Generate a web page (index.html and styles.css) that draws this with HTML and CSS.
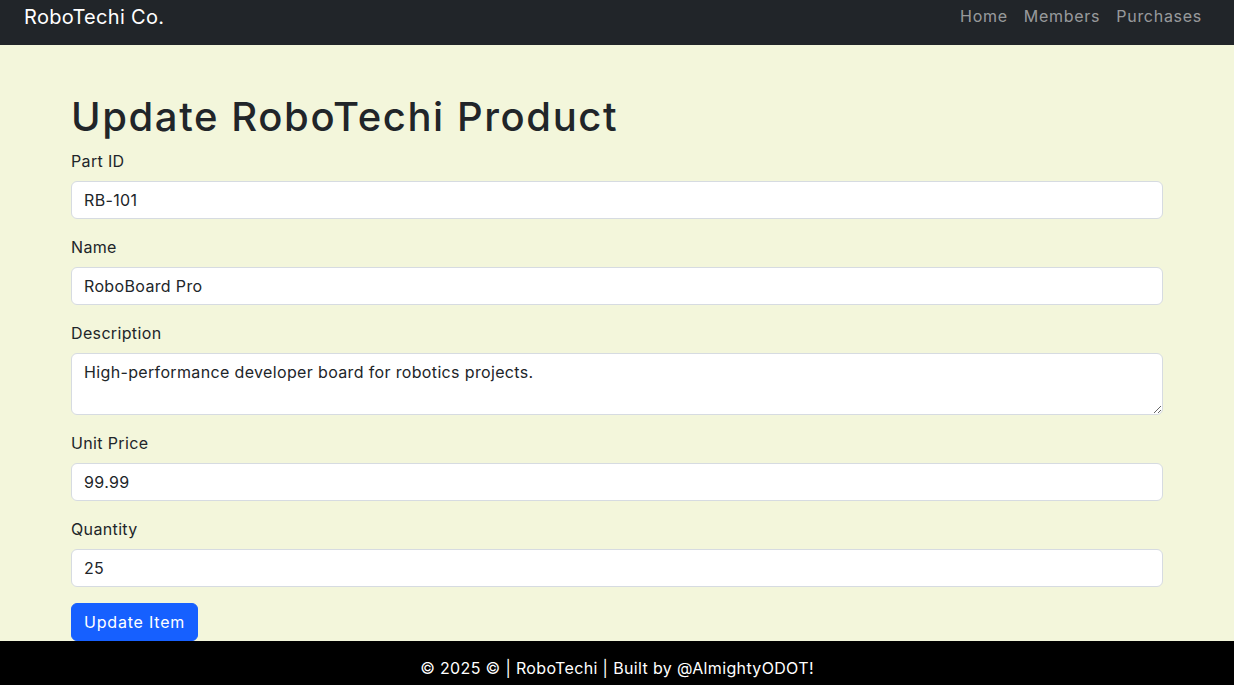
FILE: index.html
```html
<!DOCTYPE html>
<html lang="en">
<head>
<meta charset="utf-8">
<title>Update RoboTechi Product</title>
<link rel="stylesheet" href="styles.css">
</head>
<body>
<nav class="navbar">
  <a class="brand" href="#">RoboTechi Co.</a>
  <ul class="nav-links">
    <li><a href="#">Home</a></li>
    <li><a href="#">Members</a></li>
    <li><a href="#">Purchases</a></li>
  </ul>
</nav>
<main class="main">
  <div class="container">
    <h1 class="title">Update RoboTechi Product</h1>
    <form class="form">
      <div class="field">
        <label class="label" for="pid">Part ID</label>
        <input class="control" id="pid" type="text" value="RB-101">
      </div>
      <div class="field">
        <label class="label" for="name">Name</label>
        <input class="control" id="name" type="text" value="RoboBoard Pro">
      </div>
      <div class="field">
        <label class="label" for="desc">Description</label>
        <textarea class="control area" id="desc" rows="2">High-performance developer board for robotics projects.</textarea>
      </div>
      <div class="field">
        <label class="label" for="price">Unit Price</label>
        <input class="control" id="price" type="text" value="99.99">
      </div>
      <div class="field">
        <label class="label" for="qty">Quantity</label>
        <input class="control" id="qty" type="text" value="25">
      </div>
      <button class="btn" type="button">Update Item</button>
    </form>
  </div>
</main>
<footer class="footer">© 2025 © | RoboTechi | Built by @AlmightyODOT!</footer>
</body>
</html>
```
FILE: styles.css
```css
* { box-sizing: border-box; }
html, body { margin: 0; padding: 0; }
body {
  font-family: "Inter", "DejaVu Sans", sans-serif;
  letter-spacing: 0.022em;
  font-size: 16px;
  line-height: 24px;
  color: #212529;
  background: #f3f6db;
  min-height: 685px;
  display: flex;
  flex-direction: column;
}
.navbar {
  height: 45px;
  background: #212529;
  display: flex;
  align-items: flex-start;
  justify-content: space-between;
  padding: 0 24px;
  flex-shrink: 0;
}
.brand {
  color: #fff;
  text-decoration: none;
  font-size: 20px;
  line-height: 30px;
  margin-top: 2px;
  letter-spacing: 0.015em;
}
.nav-links {
  list-style: none;
  margin: 4px 0 0 0;
  padding: 0;
  display: flex;
}
.nav-links a {
  display: block;
  padding: 0 8px;
  color: rgba(255,255,255,0.55);
  text-decoration: none;
  font-size: 16px;
  line-height: 24px;
  letter-spacing: 0.045em;
}
.main { flex: 1; }
.container {
  width: 1092px;
  margin: 0 auto;
  padding-top: 48px;
}
.title {
  margin: 0 0 8px 0;
  font-size: 40px;
  line-height: 48px;
  font-weight: 500;
  letter-spacing: 0.04em;
}
.form { display: flex; flex-direction: column; }
.field {
  display: flex;
  flex-direction: column;
  margin-bottom: 16px;
}
.label {
  margin-bottom: 8px;
  line-height: 24px;
}
.control {
  display: block;
  width: 100%;
  height: 38px;
  padding: 6px 12px;
  font: inherit;
  letter-spacing: inherit;
  color: #212529;
  background: #fff;
  border: 1px solid #d6dbe1;
  border-radius: 6px;
  outline: none;
}
.area {
  height: 62px;
  resize: vertical;
}
.btn {
  align-self: flex-start;
  height: 38px;
  padding: 6px 12px;
  font: inherit;
  letter-spacing: 0.05em;
  color: #fff;
  background: #1660ff;
  border: 1px solid #1660ff;
  border-radius: 6px;
}
.footer {
  height: 44px;
  background: #000;
  color: #fff;
  text-align: center;
  padding-top: 15px;
  line-height: 24px;
  flex-shrink: 0;
}
```
